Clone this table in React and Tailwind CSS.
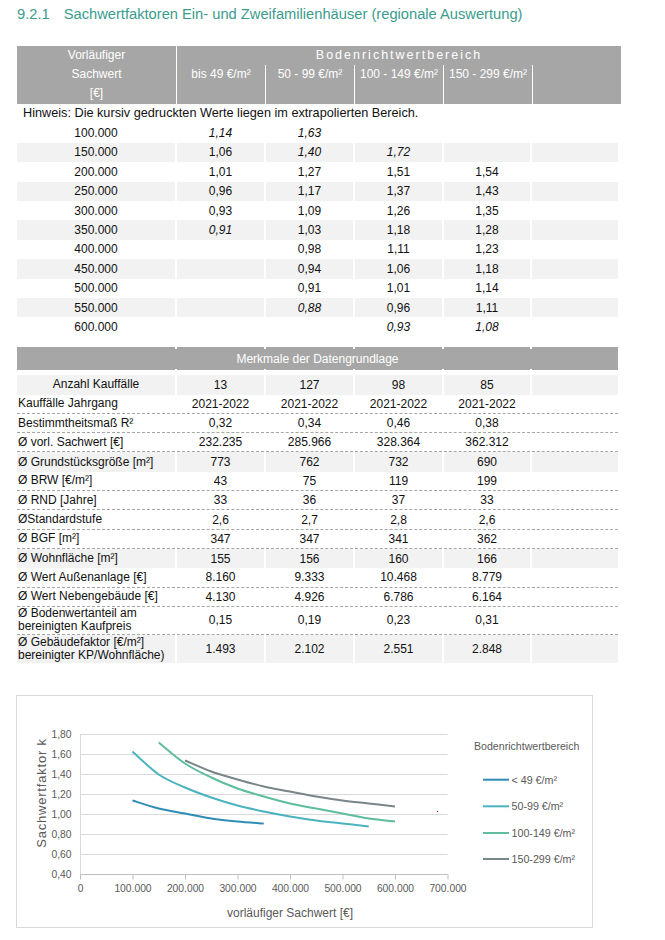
import React from "react";

const rows1 = [
  ["100.000", "*1,14", "*1,63", "", "", ""],
  ["150.000", "1,06", "*1,40", "*1,72", "", ""],
  ["200.000", "1,01", "1,27", "1,51", "1,54", ""],
  ["250.000", "0,96", "1,17", "1,37", "1,43", ""],
  ["300.000", "0,93", "1,09", "1,26", "1,35", ""],
  ["350.000", "*0,91", "1,03", "1,18", "1,28", ""],
  ["400.000", "", "0,98", "1,11", "1,23", ""],
  ["450.000", "", "0,94", "1,06", "1,18", ""],
  ["500.000", "", "0,91", "1,01", "1,14", ""],
  ["550.000", "", "*0,88", "0,96", "1,11", ""],
  ["600.000", "", "", "*0,93", "*1,08", ""],
];

const rows2 = [
  { l: ["Anzahl Kauffälle"], v: ["13", "127", "98", "85"], g: true, c: true },
  { l: ["Kauffälle Jahrgang"], v: ["2021-2022", "2021-2022", "2021-2022", "2021-2022"] },
  { l: ["Bestimmtheitsmaß R²"], v: ["0,32", "0,34", "0,46", "0,38"] },
  { l: ["Ø vorl. Sachwert [€]"], v: ["232.235", "285.966", "328.364", "362.312"] },
  { l: ["Ø Grundstücksgröße [m²]"], v: ["773", "762", "732", "690"], g: true },
  { l: ["Ø BRW [€/m²]"], v: ["43", "75", "119", "199"] },
  { l: ["Ø RND [Jahre]"], v: ["33", "36", "37", "33"] },
  { l: ["ØStandardstufe"], v: ["2,6", "2,7", "2,8", "2,6"] },
  { l: ["Ø BGF [m²]"], v: ["347", "347", "341", "362"] },
  { l: ["Ø Wohnfläche [m²]"], v: ["155", "156", "160", "166"], g: true },
  { l: ["Ø Wert Außenanlage [€]"], v: ["8.160", "9.333", "10.468", "8.779"] },
  { l: ["Ø Wert Nebengebäude [€]"], v: ["4.130", "4.926", "6.786", "6.164"] },
  { l: ["Ø Bodenwertanteil am", "bereinigten Kaufpreis"], v: ["0,15", "0,19", "0,23", "0,31"], t: true },
  { l: ["Ø Gebäudefaktor [€/m²]", "bereinigter KP/Wohnfläche)"], v: ["1.493", "2.102", "2.551", "2.848"], g: true, t: true },
];

const series = [
  { name: "< 49 €/m²", color: "#2f8db5", pts: [[1, 1.14], [1.5, 1.06], [2, 1.01], [2.5, 0.96], [3, 0.93], [3.5, 0.91]] },
  { name: "50-99 €/m²", color: "#4bb3bf", pts: [[1, 1.63], [1.5, 1.4], [2, 1.27], [2.5, 1.17], [3, 1.09], [3.5, 1.03], [4, 0.98], [4.5, 0.94], [5, 0.91], [5.5, 0.88]] },
  { name: "100-149 €/m²", color: "#5dbd9c", pts: [[1.5, 1.72], [2, 1.51], [2.5, 1.37], [3, 1.26], [3.5, 1.18], [4, 1.11], [4.5, 1.06], [5, 1.01], [5.5, 0.96], [6, 0.93]] },
  { name: "150-299 €/m²", color: "#788589", pts: [[2, 1.54], [2.5, 1.43], [3, 1.35], [3.5, 1.28], [4, 1.23], [4.5, 1.18], [5, 1.14], [5.5, 1.11], [6, 1.08]] },
];

const X = (v) => 80 + v * 52.5;
const Y = (k) => 875.5 - (k - 0.4) * 100;

function smooth(raw) {
  const p = raw.map(([a, b]) => [X(a), Y(b)]);
  let d = `M${p[0][0]},${p[0][1]}`;
  for (let i = 0; i < p.length - 1; i++) {
    const p0 = p[i - 1] || p[i];
    const p1 = p[i];
    const p2 = p[i + 1];
    const p3 = p[i + 2] || p2;
    const c1x = p1[0] + (p2[0] - p0[0]) / 6;
    const c1y = p1[1] + (p2[1] - p0[1]) / 6;
    const c2x = p2[0] - (p3[0] - p1[0]) / 6;
    const c2y = p2[1] - (p3[1] - p1[1]) / 6;
    d += ` C${c1x},${c1y} ${c2x},${c2y} ${p2[0]},${p2[1]}`;
  }
  return d;
}

const COLS = "grid grid-cols-[158px_87px_87px_87px_86px_86px] gap-x-[2px]";
const FF = "'Liberation Sans', Arial, sans-serif";

function Chart() {
  const yTicks = [0.4, 0.6, 0.8, 1.0, 1.2, 1.4, 1.6, 1.8];
  const xTicks = [0, 1, 2, 3, 4, 5, 6, 7];
  const fmt = (i) => (i === 0 ? "0" : `${i}00.000`);
  return (
    <div className="ml-[16px] mt-[32px] w-[577px] h-[233px] border border-[#d9d9d9]">
      <svg width="575" height="231" viewBox="17 697 575 231" className="block">
        {yTicks.map((k) => (
          <line key={k} x1="80" x2="447.7" y1={Y(k)} y2={Y(k)} stroke={k === 0.4 ? "#bfbfbf" : "#d9d9d9"} strokeWidth="1" />
        ))}
        <line x1="80.5" x2="80.5" y1={Y(1.8)} y2={Y(0.4)} stroke="#d9d9d9" strokeWidth="1" />
        {xTicks.map((i) => (
          <line key={i} x1={X(i) + 0.5} x2={X(i) + 0.5} y1={Y(0.4)} y2={Y(0.4) + 5} stroke="#bfbfbf" strokeWidth="1" />
        ))}
        {yTicks.map((k) => (
          <text key={k} x="71.5" y={Y(k) + 3.8} textAnchor="end" fontSize="10.3" fill="#595959" fontFamily={FF}>
            {k.toFixed(2).replace(".", ",")}
          </text>
        ))}
        {xTicks.map((i) => (
          <text key={i} x={X(i) + 0.5} y="892.5" textAnchor="middle" fontSize="10.3" fill="#595959" fontFamily={FF}>
            {fmt(i)}
          </text>
        ))}
        {series.map((s) => (
          <path key={s.name} d={smooth(s.pts)} fill="none" stroke={s.color} strokeWidth="2" strokeLinejoin="round" strokeLinecap="butt" />
        ))}
        <text x="41" y="794" transform="rotate(-90 41 794)" textAnchor="middle" dominantBaseline="central" fontSize="13" letterSpacing="0.8" fill="#595959" fontFamily={FF}>
          Sachwertfaktor k
        </text>
        <text x="290" y="918" textAnchor="middle" fontSize="12" fill="#595959" fontFamily={FF}>
          vorläufiger Sachwert [€]
        </text>
        <text x="474" y="750.8" fontSize="10.6" fill="#595959" fontFamily={FF}>
          Bodenrichtwertbereich
        </text>
        {series.map((s, i) => {
          const y = [780.7, 807.3, 834, 860][i];
          return (
            <g key={s.name}>
              <line x1="483" x2="509" y1={y} y2={y} stroke={s.color} strokeWidth="2" />
              <text x="511.5" y={y + 3.8} fontSize="10.7" fill="#595959" fontFamily={FF}>
                {s.name}
              </text>
            </g>
          );
        })}
        <rect x="437" y="812" width="1" height="1" fill="#c00000" />
      </svg>
    </div>
  );
}

function Val({ s }) {
  if (!s) return null;
  if (s.startsWith("*")) return <span className="italic">{s.slice(1)}</span>;
  return <span>{s}</span>;
}

export default function App() {
  return (
    <div className="w-[665px] min-h-[940px] bg-white text-[#111] font-[family-name:Liberation_Sans,Arial,sans-serif] pt-[6px]">
      <div className="ml-[17px] flex text-[14.7px] leading-[16px] text-[#3b9c8d]">
        <span>9.2.1</span>
        <span className="ml-[14px]">Sachwertfaktoren Ein- und Zweifamilienhäuser (regionale Auswertung)</span>
      </div>

      <div className="ml-[17px] w-[604px] mt-[24px] grid grid-cols-[159px_88px_88px_88px_88px_88px] grid-rows-[19px_19px_20px] gap-x-[1px] bg-white text-white text-[12px]">
        <div className="row-span-3 bg-[#a6a6a6] flex flex-col items-center leading-[19px]">
          <span>Vorläufiger</span>
          <span>Sachwert</span>
          <span>[€]</span>
        </div>
        <div className="col-span-5 bg-[#a6a6a6] flex items-center justify-center tracking-[2px] text-[12.5px]">
          Bodenrichtwertbereich
        </div>
        {["bis 49 €/m²", "50 - 99 €/m²", "100 - 149 €/m²", "150 - 299 €/m²", ""].map((h, i) => (
          <div key={i} className="row-span-2 bg-[#a6a6a6] text-center leading-[19px]">
            {h}
          </div>
        ))}
      </div>

      <div className="ml-[17px] w-[601px] text-[12px]">
        <div className="h-[19.4px] flex items-center pl-[6px] text-[12.7px]">
          Hinweis: Die kursiv gedruckten Werte liegen im extrapolierten Bereich.
        </div>
        {rows1.map((r, i) => (
          <div key={i} className={`${COLS} h-[19.4px]`}>
            {r.map((c, j) => (
              <div key={j} className={`flex items-center justify-center ${i % 2 === 1 ? "bg-[#f2f2f2]" : ""}`}>
                <Val s={c} />
              </div>
            ))}
          </div>
        ))}
      </div>

      <div className="ml-[17px] w-[601px] mt-[10.6px] text-[12px]">
        <div className={`${COLS} h-[2px] bg-white`}>
          {[0, 1, 2, 3, 4, 5].map((i) => (
            <div key={i} className="bg-[#a6a6a6]" />
          ))}
        </div>
        <div className="h-[20px] bg-[#a6a6a6] text-white flex items-center justify-center">
          Merkmale der Datengrundlage
        </div>
        <div className={`${COLS} h-[1px] bg-white`}>
          {[0, 1, 2, 3, 4, 5].map((i) => (
            <div key={i} className="bg-[#a6a6a6]" />
          ))}
        </div>
        <div className="h-[5px]" />
        {rows2.map((r, i) => (
          <div key={i} className={`${COLS} ${r.t ? "h-[28px]" : "h-[19.3px]"}`}>
            <div
              className={`flex flex-col justify-center leading-[13px] ${r.c ? "items-center" : "items-start pl-[1px]"} ${
                r.g ? "bg-[#f2f2f2]" : "border-b border-dashed border-[#a6a6a6]"
              }`}
            >
              {r.l.map((t, k) => (
                <span key={k}>{t}</span>
              ))}
            </div>
            {[...r.v, ""].map((v, j) => (
              <div
                key={j}
                className={`flex items-center justify-center ${r.g ? "bg-[#f2f2f2]" : "border-b border-dashed border-[#a6a6a6]"}`}
              >
                {v}
              </div>
            ))}
          </div>
        ))}
      </div>

      <Chart />
    </div>
  );
}
